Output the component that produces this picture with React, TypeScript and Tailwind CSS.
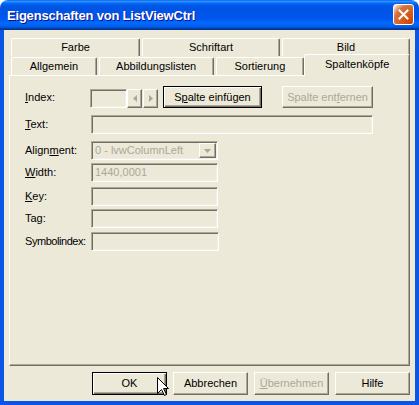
import React from "react";

const raised =
  "border border-t-white border-l-white border-r-[#716F64] border-b-[#716F64] shadow-[inset_-1px_-1px_0_#ACA899]";
const sunken =
  "border border-t-[#ACA899] border-l-[#ACA899] border-r-white border-b-white shadow-[inset_1px_1px_0_#716F64,inset_-1px_-1px_0_#F1EFE2]";
const defBtn =
  "border border-black shadow-[inset_1px_1px_0_#fff,inset_-1px_-1px_0_#716F64,inset_-2px_-2px_0_#ACA899]";

function Tab({ w, children, selected }: { w: number; children: React.ReactNode; selected?: boolean }) {
  return (
    <div
      style={{ width: w }}
      className={`flex items-center justify-center bg-[#ECE9D8] border-t border-l border-r border-t-white border-l-white border-r-[#716F64] rounded-t-[2px] shadow-[inset_-1px_0_0_#ACA899] ${
        selected ? "h-[22px] -mb-px relative z-10 pb-[3px]" : "h-[18px]"
      }`}
    >
      {children}
    </div>
  );
}

function Box({ w, children, ml = 0 }: { w: number; children?: React.ReactNode; ml?: number }) {
  return (
    <div style={{ width: w, marginLeft: ml }} className={`h-[19px] flex items-center pl-[3px] text-[#ACA899] bg-[#ECE9D8] ${sunken}`}>
      {children}
    </div>
  );
}

function Label({ children, tight }: { children: React.ReactNode; tight?: boolean }) {
  return <div className={`w-[66px] shrink-0 self-center whitespace-nowrap ${tight ? "tracking-[-0.45px]" : ""}`}>{children}</div>;
}

export default function App() {
  return (
    <div className="relative w-[419px] h-[405px] flex flex-col text-[11px] text-black font-['Liberation_Sans',Arial,sans-serif] bg-white">
      {/* Title bar */}
      <div className="h-[30px] shrink-0 rounded-t-[8px] flex items-center justify-between pl-[7px] pr-[5px] bg-[linear-gradient(180deg,#0058EE_0%,#3A93FF_4%,#288EFF_6%,#127DFF_8%,#036FFC_10%,#0262EE_14%,#0057E5_20%,#0054E3_24%,#0055EB_56%,#005BF5_66%,#026AFE_76%,#0062EF_86%,#0052D6_92%,#0040AB_94%,#003092_100%)]">
        <span className="text-white font-bold text-[13px] tracking-[-0.2px] [text-shadow:1px_1px_0_#0F1089] pt-[1px]">
          Eigenschaften von ListViewCtrl
        </span>
        <div className="w-[21px] h-[21px] mb-[1px] rounded-[3px] border border-white bg-[radial-gradient(circle_at_90%_90%,#CC4600_0%,#DC6527_55%,#CD7546_70%,#FFCCB2_90%,#fff_100%)] flex items-center justify-center">
          <svg width="11" height="11" viewBox="0 0 11 11">
            <path d="M1.5 1.5 L9.5 9.5 M9.5 1.5 L1.5 9.5" stroke="white" strokeWidth="2" strokeLinecap="square" />
          </svg>
        </div>
      </div>

      {/* Body */}
      <div className="flex-1 flex flex-col bg-[#ECE9D8] border-x-4 border-b-4 border-[#0A55E6] pl-[5px] pt-[8px]">
        {/* Tabs */}
        <div className="flex flex-col w-[401px]">
          <div className="flex pl-[2px] gap-[2px]">
            <Tab w={129}>Farbe</Tab>
            <Tab w={138}>Schriftart</Tab>
            <Tab w={128}>Bild</Tab>
          </div>
          <div className="flex items-end pl-[2px] -mt-[2px] relative z-10 h-[21px]">
            <Tab w={86}>Allgemein</Tab>
            <div className="w-[2px]" />
            <Tab w={115}>Abbildungslisten</Tab>
            <div className="w-[2px]" />
            <Tab w={89}>Sortierung</Tab>
            <Tab w={106} selected>
              Spaltenköpfe
            </Tab>
          </div>
        </div>

        {/* Panel */}
        <div className={`w-[401px] h-[291px] flex flex-col pl-[15px] pt-[10px] ${raised}`}>
          {/* Index */}
          <div className="flex items-end h-[22px]">
            <div className="w-[65px] shrink-0 self-center">
              <u className="underline-offset-1">I</u>ndex:
            </div>
            <Box w={37} />
            <div className={`w-[15px] h-[19px] flex items-center justify-center ${raised}`}>
              <svg width="4" height="7" viewBox="0 0 4 7">
                <path d="M4 0 L0 3.5 L4 7 Z" fill="#ACA899" />
              </svg>
            </div>
            <div className={`ml-px w-[15px] h-[19px] flex items-center justify-center ${raised}`}>
              <svg width="4" height="7" viewBox="0 0 4 7">
                <path d="M0 0 L4 3.5 L0 7 Z" fill="#ACA899" />
              </svg>
            </div>
            <div className={`ml-[5px] w-[99px] h-[22px] flex items-center justify-center ${defBtn}`}>
              <span>
                S<u className="underline-offset-1">p</u>alte einfügen
              </span>
            </div>
            <div className={`ml-[20px] w-[91px] h-[22px] flex items-center justify-center text-[#ACA899] ${raised}`}>
              <span>
                Spalte ent<u className="underline-offset-1">f</u>ernen
              </span>
            </div>
          </div>

          {/* Text */}
          <div className="flex mt-[7px]">
            <Label>
              <u className="underline-offset-1">T</u>ext:
            </Label>
            <Box w={282} />
          </div>

          {/* Alignment */}
          <div className="flex mt-[7px]">
            <Label>
              Align<u className="underline-offset-1">m</u>ent:
            </Label>
            <div className={`w-[127px] h-[19px] flex items-center justify-between pl-[3px] pr-[1px] text-[#ACA899] ${sunken}`}>
              <span>0 - lvwColumnLeft</span>
              <div className={`w-[17px] h-[15px] flex items-center justify-center ${raised}`}>
                <svg width="7" height="4" viewBox="0 0 7 4">
                  <path d="M0 0 L7 0 L3.5 4 Z" fill="#ACA899" />
                </svg>
              </div>
            </div>
          </div>

          {/* Width */}
          <div className="flex mt-[3px]">
            <Label>
              <u className="underline-offset-1">W</u>idth:
            </Label>
            <Box w={127}>1440,0001</Box>
          </div>

          {/* Key */}
          <div className="flex mt-[5px]">
            <Label>
              <u className="underline-offset-1">K</u>ey:
            </Label>
            <Box w={127} />
          </div>

          {/* Tag */}
          <div className="flex mt-[3px]">
            <Label>Tag:</Label>
            <Box w={127} />
          </div>

          {/* Symbolindex */}
          <div className="flex mt-[4px]">
            <Label tight>Symbolindex:</Label>
            <Box w={128} />
          </div>
        </div>

        {/* Bottom buttons */}
        <div className="flex mt-[6px] ml-[83px] gap-[6px]">
          <div className={`w-[75px] h-[23px] flex items-center justify-center ${defBtn}`}>OK</div>
          <div className={`w-[75px] h-[23px] flex items-center justify-center ${raised}`}>Abbrechen</div>
          <div className={`w-[75px] h-[23px] flex items-center justify-center text-[#ACA899] ${raised}`}>
            <span>
              <u className="underline-offset-1">Ü</u>bernehmen
            </span>
          </div>
          <div className={`w-[75px] h-[23px] flex items-center justify-center ${raised}`}>Hilfe</div>
        </div>
      </div>

      {/* Mouse cursor */}
      <svg className="absolute left-[157px] top-[377px]" width="13" height="20" viewBox="0 0 13 20">
        <path d="M0.5 0.5 L0.5 16.5 L4.5 12.5 L7.5 18.5 L9.5 17.5 L6.5 11.5 L11.5 11.5 Z" fill="white" stroke="black" strokeWidth="1" />
      </svg>
    </div>
  );
}
